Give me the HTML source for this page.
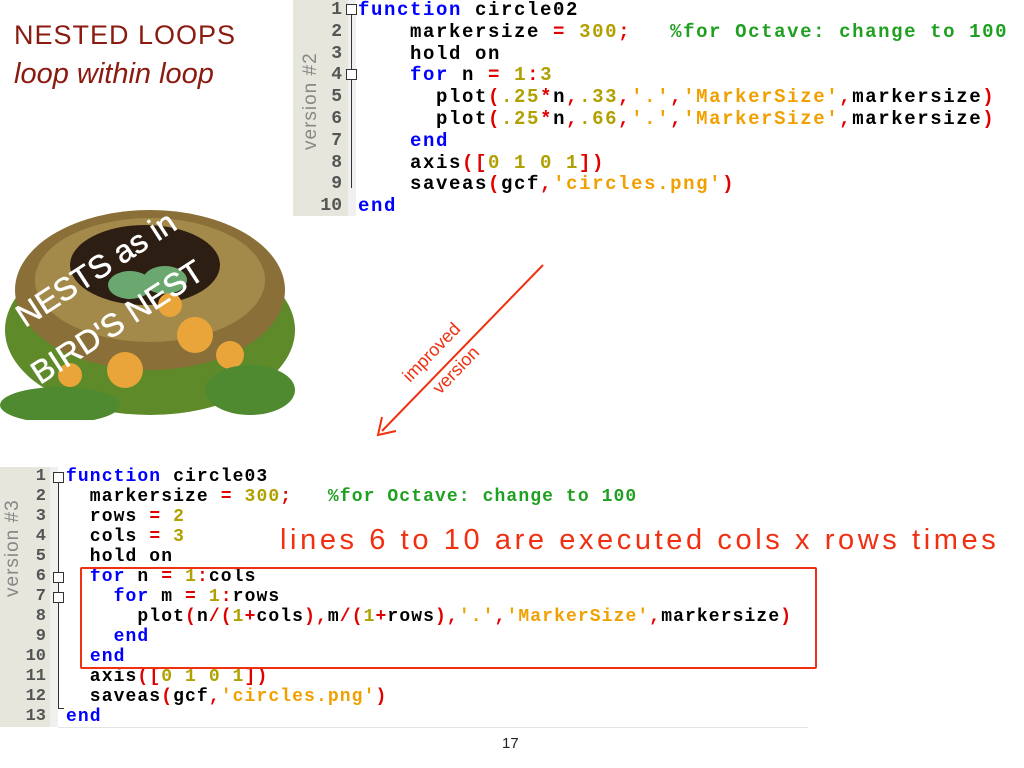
<!DOCTYPE html>
<html><head><style>
body{margin:0;width:1024px;height:768px;background:#fff;position:relative;overflow:hidden;font-family:"Liberation Sans",sans-serif}
.code{position:absolute;font-family:"Liberation Mono",monospace;font-weight:bold;white-space:pre;color:#000}
.k{color:#0000ff}.o{color:#e00000}.n{color:#b0a000}.s{color:#f0a000}.c{color:#20a020}
.gut{position:absolute;background:#e6e6dc}
.ln{position:absolute;font-family:"Liberation Mono",monospace;font-weight:bold;color:#555;text-align:right;white-space:pre}
.hand{position:absolute;font-family:"Liberation Sans",sans-serif;color:#8b1a10}
</style></head><body>

<div class="hand" style="left:14px;top:20px;font-size:27px;letter-spacing:1px">NESTED LOOPS</div>
<div class="hand" style="left:14px;top:58px;font-size:29px;font-style:italic">loop within loop</div>

<!-- top panel -->
<div class="gut" style="left:293px;top:0;width:55px;height:216px"></div>
<div style="position:absolute;left:348px;top:0;width:8px;height:216px;background:#f0f0f0"></div>
<div style="position:absolute;left:300px;top:40px;width:24px;height:110px;color:#888;font-size:19px;font-family:'Liberation Sans',sans-serif;writing-mode:vertical-rl;transform:rotate(180deg);letter-spacing:1px">version #2</div>
<div class="ln" style="left:300px;top:0px;width:42px;font-size:18px;line-height:21.8px">1
2
3
4
5
6
7
8
9
10</div>
<div style="position:absolute;left:351px;top:14px;width:1px;height:174px;background:#333"></div>
<div style="position:absolute;left:346px;top:4px;width:9px;height:9px;border:1px solid #333;background:#fff"></div>
<div style="position:absolute;left:346px;top:69px;width:9px;height:9px;border:1px solid #333;background:#fff"></div>
<div class="code" style="left:358px;top:0px;font-size:19px;line-height:21.8px;letter-spacing:1.6px"><span class="k">function</span> circle02
    markersize <span class="o">=</span> <span class="n">300</span><span class="o">;</span>   <span class="c">%for Octave: change to 100</span>
    hold on
    <span class="k">for</span> n <span class="o">=</span> <span class="n">1</span><span class="o">:</span><span class="n">3</span>
      plot<span class="o">(</span><span class="n">.25</span><span class="o">*</span>n<span class="o">,</span><span class="n">.33</span><span class="o">,</span><span class="s">'.'</span><span class="o">,</span><span class="s">'MarkerSize'</span><span class="o">,</span>markersize<span class="o">)</span>
      plot<span class="o">(</span><span class="n">.25</span><span class="o">*</span>n<span class="o">,</span><span class="n">.66</span><span class="o">,</span><span class="s">'.'</span><span class="o">,</span><span class="s">'MarkerSize'</span><span class="o">,</span>markersize<span class="o">)</span>
    <span class="k">end</span>
    axis<span class="o">([</span><span class="n">0 1 0 1</span><span class="o">])</span>
    saveas<span class="o">(</span>gcf<span class="o">,</span><span class="s">'circles.png'</span><span class="o">)</span>
<span class="k">end</span></div>

<!-- nest -->
<svg style="position:absolute;left:0;top:180px" width="300" height="240">
<ellipse cx="150" cy="150" rx="145" ry="85" fill="#5f8a2a"/>
<ellipse cx="150" cy="110" rx="135" ry="80" fill="#8a7038"/>
<ellipse cx="150" cy="100" rx="115" ry="62" fill="#a48a4a"/>
<ellipse cx="145" cy="85" rx="75" ry="40" fill="#2c1e12"/>
<ellipse cx="130" cy="105" rx="22" ry="14" fill="#6aa870"/>
<ellipse cx="165" cy="100" rx="22" ry="14" fill="#6aa870"/>
<g fill="#e9a53a"><circle cx="195" cy="155" r="18"/><circle cx="125" cy="190" r="18"/><circle cx="230" cy="175" r="14"/><circle cx="70" cy="195" r="12"/><circle cx="170" cy="125" r="12"/></g>
<g fill="#4f8a30"><ellipse cx="60" cy="225" rx="60" ry="18"/><ellipse cx="250" cy="210" rx="45" ry="25"/></g>
<g fill="#fff" font-family="Liberation Sans" font-size="32" stroke="#fff" stroke-width="0.5">
<text x="25" y="148" transform="rotate(-33 25 148)">NESTS as in</text>
<text x="40" y="205" transform="rotate(-33 40 205)">BIRD'S NEST</text></g>
</svg>

<!-- arrow -->
<svg style="position:absolute;left:360px;top:255px" width="200" height="200">
<line x1="183" y1="10" x2="22" y2="176" stroke="#f03010" stroke-width="2"/>
<polyline points="22,162 18,180 36,176" fill="none" stroke="#f03010" stroke-width="2"/>
<g fill="#f03010" font-size="18" font-family="Liberation Sans"><text x="50" y="128" transform="rotate(-46 50 128)">improved</text><text x="80" y="140" transform="rotate(-46 80 140)">version</text></g>
</svg>

<!-- bottom panel -->
<div class="gut" style="left:0;top:467px;width:50px;height:260px"></div>
<div style="position:absolute;left:50px;top:467px;width:8px;height:260px;background:#f0f0f0"></div>
<div style="position:absolute;left:58px;top:727px;width:750px;height:1px;background:#e4e4e4"></div>
<div style="position:absolute;left:2px;top:487px;width:24px;height:110px;color:#888;font-size:19px;writing-mode:vertical-rl;transform:rotate(180deg);letter-spacing:1px">version #3</div>
<div class="ln" style="left:4px;top:467px;width:42px;font-size:17px;line-height:20px">1
2
3
4
5
6
7
8
9
10
11
12
13</div>
<div style="position:absolute;left:58px;top:481px;width:1px;height:228px;background:#333"></div>
<div style="position:absolute;left:58px;top:708px;width:6px;height:1px;background:#333"></div>
<div style="position:absolute;left:53px;top:472px;width:9px;height:9px;border:1px solid #333;background:#fff"></div>
<div style="position:absolute;left:53px;top:572px;width:9px;height:9px;border:1px solid #333;background:#fff"></div>
<div style="position:absolute;left:53px;top:592px;width:9px;height:9px;border:1px solid #333;background:#fff"></div>
<div class="code" style="left:66px;top:467px;font-size:18px;line-height:20px;letter-spacing:1.1px"><span class="k">function</span> circle03
  markersize <span class="o">=</span> <span class="n">300</span><span class="o">;</span>   <span class="c">%for Octave: change to 100</span>
  rows <span class="o">=</span> <span class="n">2</span>
  cols <span class="o">=</span> <span class="n">3</span>
  hold on
  <span class="k">for</span> n <span class="o">=</span> <span class="n">1</span><span class="o">:</span>cols
    <span class="k">for</span> m <span class="o">=</span> <span class="n">1</span><span class="o">:</span>rows
      plot<span class="o">(</span>n<span class="o">/(</span><span class="n">1</span><span class="o">+</span>cols<span class="o">),</span>m<span class="o">/(</span><span class="n">1</span><span class="o">+</span>rows<span class="o">),</span><span class="s">'.'</span><span class="o">,</span><span class="s">'MarkerSize'</span><span class="o">,</span>markersize<span class="o">)</span>
    <span class="k">end</span>
  <span class="k">end</span>
  axis<span class="o">([</span><span class="n">0 1 0 1</span><span class="o">])</span>
  saveas<span class="o">(</span>gcf<span class="o">,</span><span class="s">'circles.png'</span><span class="o">)</span>
<span class="k">end</span></div>
<div style="position:absolute;left:80px;top:567px;width:733px;height:98px;border:2px solid #f03010;border-radius:2px"></div>
<div style="position:absolute;left:280px;top:524px;font-size:29px;color:#f03010;letter-spacing:3.6px;white-space:nowrap">lines 6 to 10 are executed cols x rows times</div>

<div style="position:absolute;left:502px;top:735px;font-size:15px;color:#222">17</div>
</body></html>
